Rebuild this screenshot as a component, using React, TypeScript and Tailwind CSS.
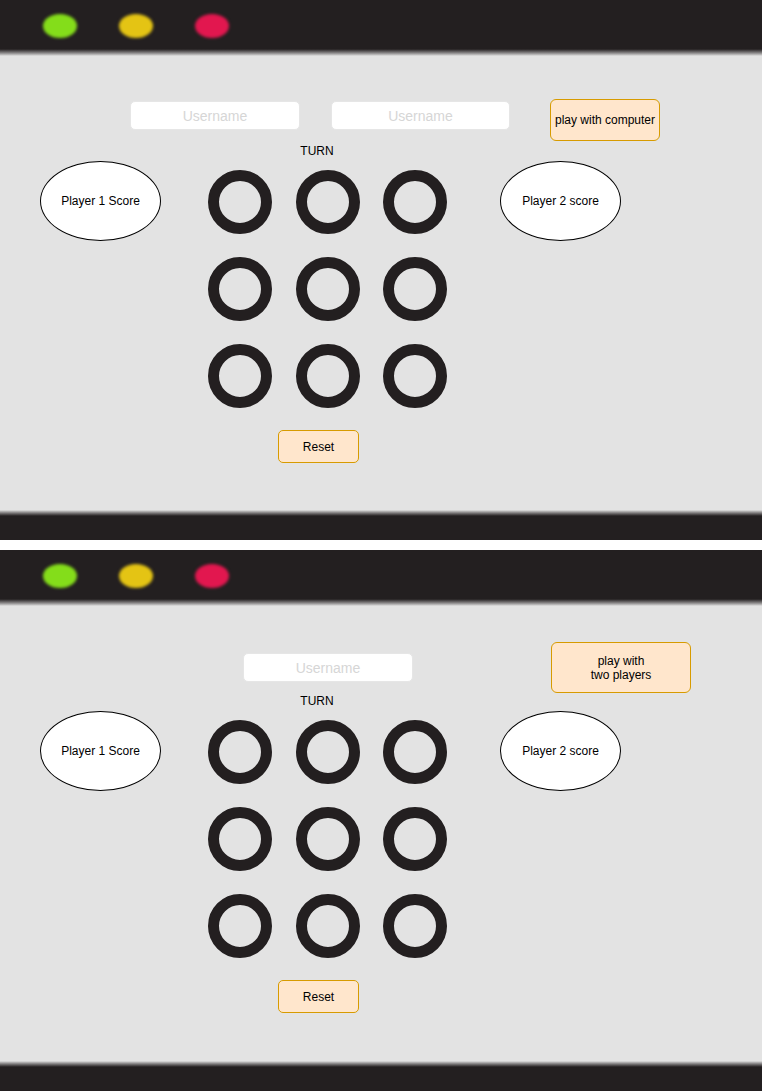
import React from "react";

// ============================================================================
// PIEZAS
// ============================================================================

function TopBar() {
  return (
    <>
      <div className="h-[49px] bg-[#231f20] flex items-center pl-[43px] gap-[42px] pt-[3px]">
        <span className="block w-[34px] h-[24px] rounded-[50%] bg-[#84dd1a] blur-[1.5px]" />
        <span className="block w-[34px] h-[24px] rounded-[50%] bg-[#e4c414] blur-[1.5px]" />
        <span className="block w-[34px] h-[24px] rounded-[50%] bg-[#e2174f] blur-[1.5px]" />
      </div>
      <div className="h-[7px] bg-linear-to-b from-[#231f20] to-[#e3e3e3]" />
    </>
  );
}

function BottomBar() {
  return (
    <>
      <div className="h-[6px] bg-linear-to-b from-[#e3e3e3] to-[#231f20]" />
      <div className="h-[24px] bg-[#231f20]" />
    </>
  );
}

function Ring() {
  return <div className="w-[64px] h-[64px] rounded-full border-[11px] border-[#231f20] blur-[0.7px]" />;
}

function ScoreBubble({ label }: { label: string }) {
  return (
    <div className="w-[121px] h-[80px] rounded-[50%] bg-white border border-black flex items-center justify-center text-[12px] text-black">
      {label}
    </div>
  );
}

function UsernameInput({ width }: { width: string }) {
  return (
    <input
      placeholder="Username"
      className={`${width} h-[29px] rounded-[5px] bg-white border border-[#e6e6e6] text-center text-[14px] text-black placeholder:text-[#d6d6d6] outline-none`}
    />
  );
}

function Board() {
  return (
    <div className="grid grid-cols-3 gap-x-[23.5px] gap-y-[23px] mt-[9px] ml-[47px]">
      {Array.from({ length: 9 }).map((_, i) => (
        <Ring key={i} />
      ))}
    </div>
  );
}

// ============================================================================
// PANEL
// ============================================================================

function GamePanel({ twoInputs, height }: { twoInputs: boolean; height: string }) {
  return (
    <div className={`${height} flex flex-col bg-[#e3e3e3]`}>
      <TopBar />
      <div className="flex-1 flex flex-col pt-[36px]">
        {/* cabecera */}
        <div className="h-[52px] flex items-start">
          {twoInputs ? (
            <>
              <div className="ml-[130px] mt-[9px]">
                <UsernameInput width="w-[170px]" />
              </div>
              <div className="ml-[31px] mt-[9px]">
                <UsernameInput width="w-[179px]" />
              </div>
              <button className="ml-[40px] mt-[7px] w-[110px] h-[42px] rounded-[6px] bg-[#ffe6cc] border border-[#d79b00] text-[12px] text-black">
                play with computer
              </button>
            </>
          ) : (
            <>
              <div className="ml-[243px] mt-[11px]">
                <UsernameInput width="w-[170px]" />
              </div>
              <button className="ml-[138px] w-[140px] h-[51px] rounded-[6px] bg-[#ffe6cc] border border-[#d79b00] text-[12px] leading-[14px] text-black">
                play with
                <br />
                two players
              </button>
            </>
          )}
        </div>

        <div className="h-[14px] leading-[14px] text-[12px] text-black w-[634px] text-center">TURN</div>

        {/* tablero */}
        <div className="flex items-start mt-[3px]">
          <div className="ml-[40px]">
            <ScoreBubble label="Player 1 Score" />
          </div>
          <Board />
          <div className="ml-[53px]">
            <ScoreBubble label="Player 2 score" />
          </div>
        </div>

        <button className="mt-[22px] ml-[278px] w-[81px] h-[33px] rounded-[5px] bg-[#ffe6cc] border border-[#d79b00] text-[12px] text-black">
          Reset
        </button>
      </div>
      <BottomBar />
    </div>
  );
}

export default function App() {
  return (
    <div className="w-[762px] h-[1091px] bg-white overflow-hidden" style={{ fontFamily: '"Liberation Sans", Arial, sans-serif' }}>
      <GamePanel twoInputs height="h-[540px]" />
      <div className="h-[10px] bg-white" />
      <GamePanel twoInputs={false} height="h-[541px]" />
    </div>
  );
}
